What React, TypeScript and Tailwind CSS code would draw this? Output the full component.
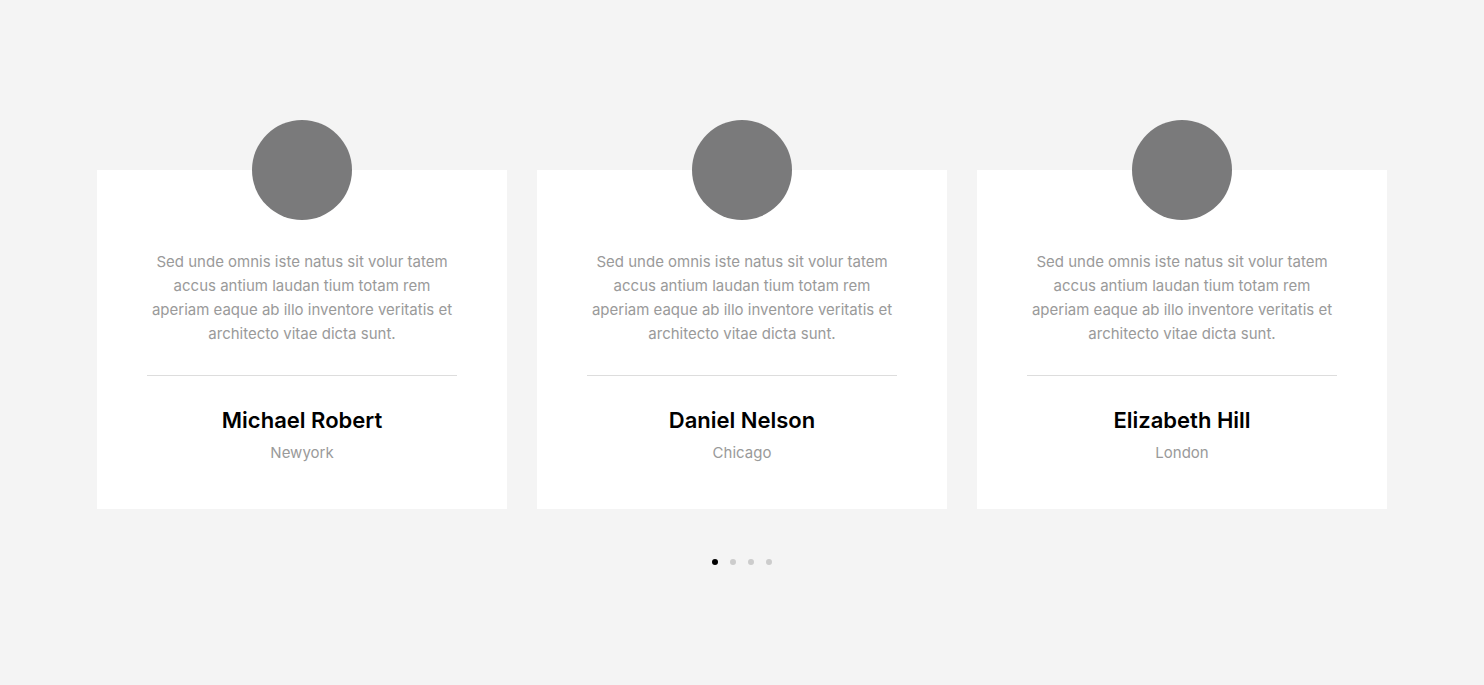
import React from 'react';

const people = [
  { name: 'Michael Robert', city: 'Newyork' },
  { name: 'Daniel Nelson', city: 'Chicago' },
  { name: 'Elizabeth Hill', city: 'London' },
];

const quote =
  'Sed unde omnis iste natus sit volur tatem accus antium laudan tium totam rem aperiam eaque ab illo inventore veritatis et architecto vitae dicta sunt.';

const App: React.FC = () => {
  return (
    <div
      className="min-h-[685px] bg-[#f4f4f4] pt-[120px]"
      style={{ fontFamily: 'Inter, "Noto Sans", sans-serif' }}
    >
      <div className="mx-auto grid max-w-[1290px] grid-cols-3 gap-[30px] pt-[50px]">
        {people.map((p) => (
          <div key={p.name} className="bg-white px-[50px] pb-[44px] text-center">
            <div className="mx-auto -mt-[50px] h-[100px] w-[100px] rounded-full bg-[#7a7a7b]" />
            <p className="mt-[30px] text-[15px] leading-6 text-[#9a9a9a]">{quote}</p>
            <div className="mt-[29px] h-px bg-[#dddddd]" />
            <h3 className="mt-[29px] text-[22px] font-semibold leading-[30px] text-black">{p.name}</h3>
            <div className="mt-[6px] text-[15px] leading-6 text-[#9a9a9a]">{p.city}</div>
          </div>
        ))}
      </div>

      <div className="mt-[50px] flex justify-center gap-[12px]">
        <span className="h-[6px] w-[6px] rounded-full bg-black" />
        <span className="h-[6px] w-[6px] rounded-full bg-[#cccccc]" />
        <span className="h-[6px] w-[6px] rounded-full bg-[#cccccc]" />
        <span className="h-[6px] w-[6px] rounded-full bg-[#cccccc]" />
      </div>
    </div>
  );
};

export default App;
